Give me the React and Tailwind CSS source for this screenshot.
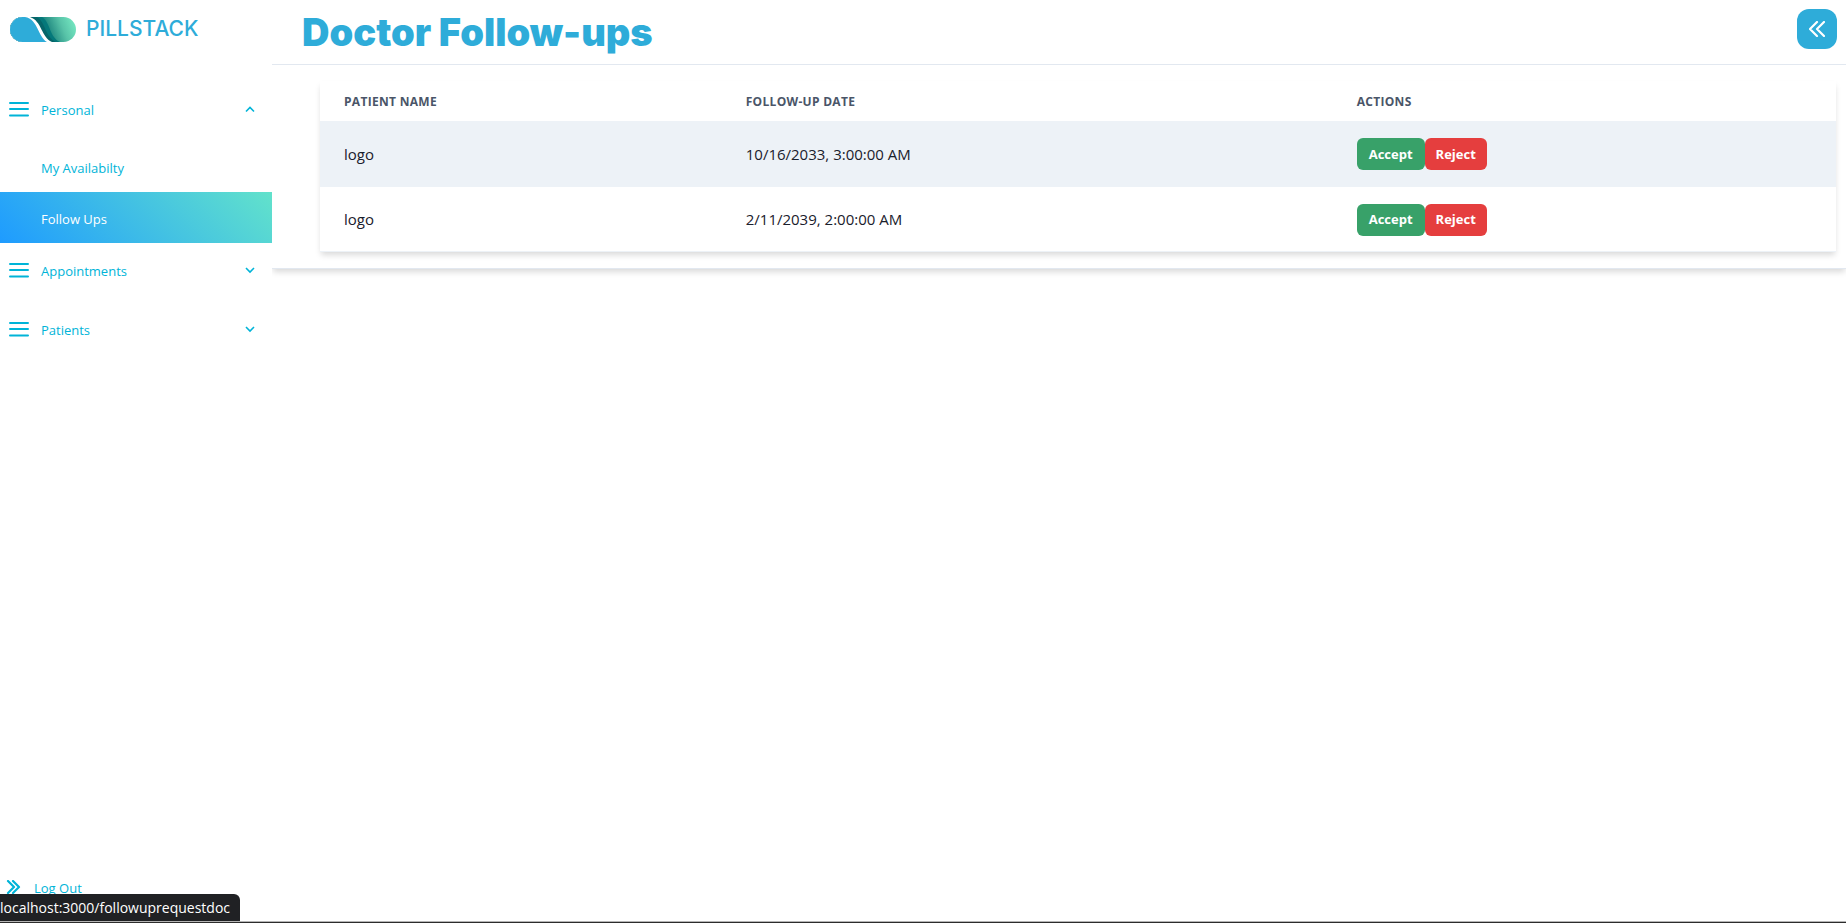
const sections = [
  { label: "Personal", open: true, items: [{ label: "My Availabilty" }, { label: "Follow Ups", active: true }] },
  { label: "Appointments" },
  { label: "Patients" },
];

const followUps = [
  { name: "logo", date: "10/16/2033, 3:00:00 AM" },
  { name: "logo", date: "2/11/2039, 2:00:00 AM" },
];

function Logo() {
  return (
    <svg viewBox="0 0 66 25" className="h-[25px] w-[66px]" aria-hidden="true">
      <defs>
        <clipPath id="pill"><rect width="66" height="25" rx="12.5" /></clipPath>
        <linearGradient id="mint" gradientUnits="userSpaceOnUse" x1="34" y1="16" x2="64" y2="4">
          <stop offset="0" stopColor="#04787a" />
          <stop offset="0.25" stopColor="#2b9488" />
          <stop offset="0.6" stopColor="#58c3a8" />
          <stop offset="1" stopColor="#74e6c0" />
        </linearGradient>
      </defs>
      <g clipPath="url(#pill)">
        <rect width="66" height="25" fill="url(#mint)" />
        <path d="M0 0H32C41 6 39 20 50 25H0Z" fill="#04787a" />
        <path d="M0 0H27C36 6 35 20 46 25H0Z" fill="#056569" />
        <path d="M0 0H20C32 4 31 20 42 25H0Z" fill="#fff" />
        <path d="M0 0H15C28 2 28 20 37 25H0Z" fill="#2eacd9" />
      </g>
    </svg>
  );
}

function Bars() {
  return (
    <svg viewBox="0 0 20 16" className="h-4 w-5" stroke="currentColor" strokeWidth="2" strokeLinecap="round" aria-hidden="true">
      <path d="M1 1H19M1 7H19M1 13.5H19" />
    </svg>
  );
}

function Chevron({ open }) {
  return (
    <svg viewBox="0 0 10 10" className="h-[10px] w-[10px]" fill="none" stroke="currentColor" strokeWidth="1.6" aria-hidden="true">
      <path d={open ? "M1 6.5L5 2.5L9 6.5" : "M1 2L5 6L9 2"} />
    </svg>
  );
}

function DoubleChevron({ left }) {
  return (
    <svg viewBox="0 0 16 16" className="h-4 w-4" fill="none" stroke="currentColor" strokeWidth="2.2" strokeLinecap="round" strokeLinejoin="round" aria-hidden="true">
      <path d={left ? "M8 1L1 8L8 15M15 1L8 8L15 15" : "M2 1L8 7L2 13M7 1L13 7L7 13"} />
    </svg>
  );
}

function Sidebar() {
  return (
    <aside className="z-10 flex w-[272px] shrink-0 flex-col bg-white text-[13px] text-[#00b4d8]">
      <a href="#home" className="flex items-center gap-[10px] px-[10px] pt-[14px] font-['Inter',sans-serif] text-[21px] leading-[30px] font-medium text-[#2eacd9]">
        <Logo />
        PILLSTACK
      </a>
      <nav className="flex-1 pt-[38px]">
        {sections.map((section) => (
          <div key={section.label}>
            <button type="button" aria-expanded={!!section.open} className="mb-1 flex h-[55px] w-full items-center gap-3 pr-[17px] pl-[9px]">
              <Bars />
              <span className="flex-1 pt-[2px] text-left">{section.label}</span>
              <Chevron open={section.open} />
            </button>
            {section.items && (
              <ul>
                {section.items.map((item) => (
                  <li key={item.label}>
                    <a
                      href="#item"
                      className={
                        item.active
                          ? "flex h-[51px] items-center bg-linear-[45deg,#1e9bff,#62e2cb] pt-1 pl-[41px] text-white"
                          : "flex h-[51px] items-center pt-1 pl-[41px]"
                      }
                    >
                      {item.label}
                    </a>
                  </li>
                ))}
              </ul>
            )}
          </div>
        ))}
      </nav>
      <button type="button" className="flex items-center gap-3 pb-[25px] pl-[6px]">
        <DoubleChevron />
        Log Out
      </button>
    </aside>
  );
}

export default function App() {
  return (
    <div className="relative flex min-h-screen overflow-hidden bg-white font-['Open_Sans','Noto_Sans',sans-serif]">
      <Sidebar />
      <main className="min-w-0 flex-1">
        <div className="border-b border-[#e2e8f0] shadow-[0_4px_6px_-1px_rgba(0,0,0,0.15)]">
          <header className="flex h-[65px] items-start justify-between border-b border-[#e2e8f0] pt-[9px] pr-[9px] pl-[30px]">
            <h1 className="font-['Inter',sans-serif] text-[38px] leading-[46px] font-black text-[#2eacd9]">Doctor Follow-ups</h1>
            <button type="button" aria-label="Collapse sidebar" className="flex h-10 w-10 items-center justify-center rounded-xl bg-[#2eacd9] text-white">
              <DoubleChevron left />
            </button>
          </header>
          <div className="pt-4 pr-[10px] pb-4 pl-12">
            <table className="w-full table-fixed text-left shadow-[0_4px_6px_-1px_rgba(0,0,0,0.15)]">
              <colgroup>
                <col className="w-[26.5%]" />
                <col className="w-[40.3%]" />
                <col />
              </colgroup>
              <thead>
                <tr className="h-10 text-xs font-bold tracking-wide text-[#4a5568]">
                  <th className="px-6 pt-[2px]">PATIENT NAME</th>
                  <th className="px-6 pt-[2px]">FOLLOW-UP DATE</th>
                  <th className="px-6 pt-[2px]">ACTIONS</th>
                </tr>
              </thead>
              <tbody>
                {followUps.map((row) => (
                  <tr key={row.date} className="h-[65px] border-b border-[#edf2f7] text-[15px] text-[#1a202c] odd:bg-[#edf2f7]">
                    <td className="px-6 pt-[2px]">{row.name}</td>
                    <td className="px-6 pt-[2px]">{row.date}</td>
                    <td className="px-6 pt-[2px]">
                      <div className="flex text-[13px] font-bold text-white">
                        <button type="button" className="h-8 rounded-md bg-[#38a169] px-3">Accept</button>
                        <button type="button" className="h-8 rounded-md bg-[#e53e3e] px-[11px]">Reject</button>
                      </div>
                    </td>
                  </tr>
                ))}
              </tbody>
            </table>
          </div>
        </div>
      </main>
      <div className="absolute bottom-0 left-0 z-20 w-full border-b border-[#2c2c2c]">
        <div className="border-b border-[#b5b5b5]">
          <div className="h-[27px] w-[240px] rounded-tr-md bg-[#202124] text-[14px] leading-[27px] whitespace-nowrap text-white">
            localhost:3000/followuprequestdoc
          </div>
        </div>
      </div>
    </div>
  );
}
